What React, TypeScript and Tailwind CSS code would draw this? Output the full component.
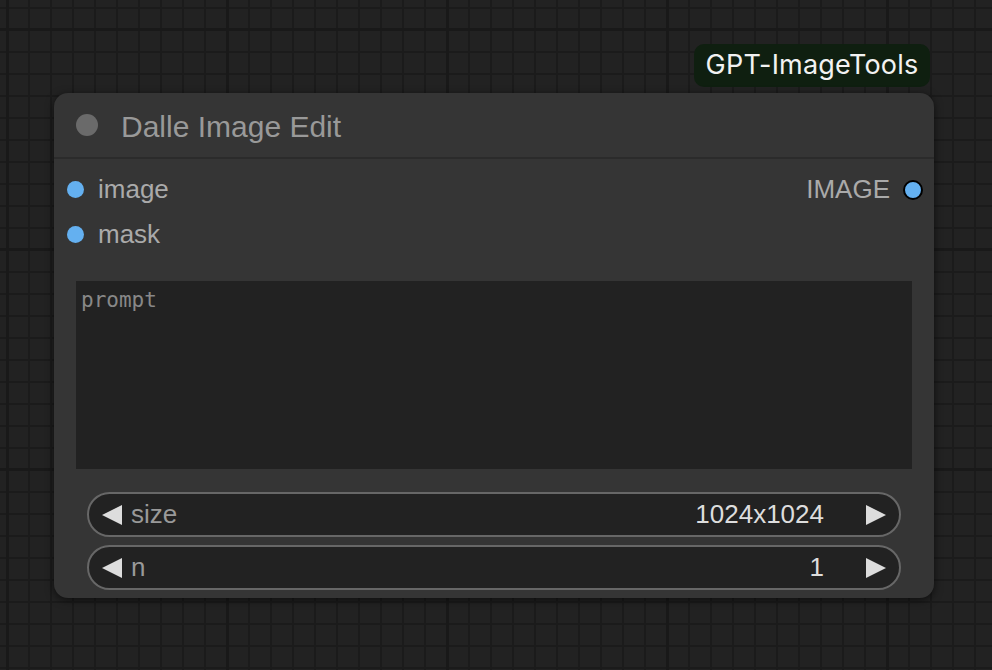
import React from 'react';

const sans = "font-['Liberation_Sans',Arial,sans-serif]";

const Triangle: React.FC<{ dir: 'left' | 'right' }> = ({ dir }) => (
  <svg width="22" height="22" viewBox="0 0 22 22" className="shrink-0">
    {dir === 'left' ? (
      <polygon points="21,1 21,21 1,11" fill="#dddddd" />
    ) : (
      <polygon points="1,1 1,21 21,11" fill="#dddddd" />
    )}
  </svg>
);

const ComboWidget: React.FC<{ label: string; value: string }> = ({ label, value }) => (
  <div className="flex items-center h-[45px] rounded-full border-2 border-[#676767] bg-[#222222] pl-[12px] pr-[12px]">
    <Triangle dir="left" />
    <span className="ml-[8px] text-[26px] text-[#999999]">{label}</span>
    <span className="ml-auto mr-[41px] text-[26px] text-[#dddddd]">{value}</span>
    <Triangle dir="right" />
  </div>
);

const GridBackground: React.FC = () => (
  <svg className="absolute inset-0 w-full h-full" width="992" height="670">
    <defs>
      <pattern id="minor" x="6" y="7" width="22" height="22" patternUnits="userSpaceOnUse">
        <rect x="0" y="0" width="2" height="22" fill="#1b1b1b" />
        <rect x="0" y="0" width="22" height="2" fill="#1b1b1b" />
      </pattern>
      <pattern id="major" x="226" y="28" width="220" height="220" patternUnits="userSpaceOnUse">
        <rect x="0" y="0" width="3" height="220" fill="#191919" />
        <rect x="0" y="0" width="220" height="3" fill="#191919" />
      </pattern>
    </defs>
    <rect width="100%" height="100%" fill="#222222" />
    <rect width="100%" height="100%" fill="url(#minor)" />
    <rect width="100%" height="100%" fill="url(#major)" />
  </svg>
);

export default function App() {
  return (
    <div className={`relative w-[992px] h-[670px] overflow-hidden bg-[#222222] ${sans}`}>
      <GridBackground />

      {/* group badge */}
      <div className="absolute left-[694px] top-[44px] w-[236px] h-[43px] rounded-[10px] bg-[#0f1f10] flex items-center justify-center">
        <span className="font-['Inter',sans-serif] text-[27px] text-[#f2f2f2] tracking-[0.2px]">GPT-ImageTools</span>
      </div>

      {/* node */}
      <div className="absolute left-[54px] top-[93px] w-[880px] h-[505px] rounded-[14px] bg-[#353535] shadow-[0_2px_8px_rgba(0,0,0,0.6)] flex flex-col">
        <div className="flex items-center h-[66px] border-b-2 border-[#2b2b2b] pl-[22px]">
          <span className="w-[22px] h-[22px] rounded-full bg-[#6a6a6a]" />
          <span className="ml-[23px] pt-[3px] text-[30px] text-[#999999]">Dalle Image Edit</span>
        </div>

        <div className="flex pt-[8px]">
          <div className="flex flex-col flex-1">
            <div className="flex items-center h-[45px] pl-[13px]">
              <span className="w-[17px] h-[17px] rounded-full bg-[#64b0f0]" />
              <span className="ml-[14px] text-[26px] text-[#aaaaaa]">image</span>
            </div>
            <div className="flex items-center h-[45px] pl-[13px]">
              <span className="w-[17px] h-[17px] rounded-full bg-[#64b0f0]" />
              <span className="ml-[14px] text-[26px] text-[#aaaaaa]">mask</span>
            </div>
          </div>
          <div className="flex items-start">
            <div className="flex items-center h-[45px] pr-[11px]">
              <span className="text-[26px] text-[#aaaaaa]">IMAGE</span>
              <span className="ml-[13px] w-[20px] h-[20px] rounded-full bg-[#64b0f0] border-2 border-black" />
            </div>
          </div>
        </div>

        <div className="mt-[24px] mx-[22px] h-[188px] bg-[#222222] px-[5px] pt-[4px]">
          <span className="font-['DejaVu_Sans_Mono',monospace] text-[21px] text-[#888888]">prompt</span>
        </div>

        <div className="flex flex-col gap-[8px] mt-[23px] mx-[33px]">
          <ComboWidget label="size" value="1024x1024" />
          <ComboWidget label="n" value="1" />
        </div>
      </div>
    </div>
  );
}
